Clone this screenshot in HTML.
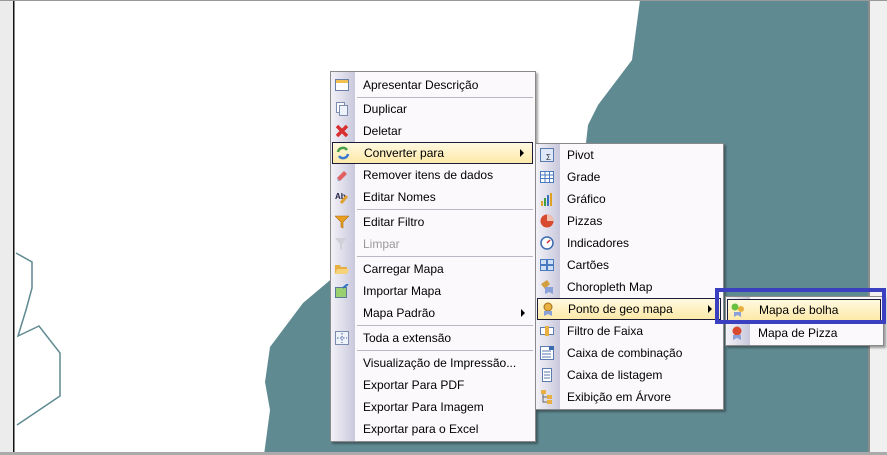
<!DOCTYPE html>
<html><head><meta charset="utf-8"><style>
body{margin:0;width:887px;height:455px;overflow:hidden;background:#fff;position:relative;font-family:"Liberation Sans",sans-serif;font-size:12px;color:#000}
.abs{position:absolute}
.menu{position:absolute;background:#fbf9fc;border:1px solid #8a8a8a;box-shadow:2px 2px 2px rgba(0,0,0,.35)}
.menu .col{position:absolute;left:0;top:0;bottom:0;width:24px;background:linear-gradient(90deg,#f3f2f8,#c9c8dc)}
.it{position:absolute;left:0;right:0;height:22px;line-height:22px}
.it span{position:absolute}
.hl{background:linear-gradient(#fff9e0,#fde9a8);border:1px solid #1b1b3a;left:1px;right:2px;height:20px;line-height:20px}
.sep{position:absolute;left:26px;right:2px;height:1px;background:#b8b8c4}
.ic{position:absolute;left:4px;top:4px;width:14px;height:14px}
.arr{position:absolute;right:10px;top:7px;width:0;height:0;border-left:4px solid #000;border-top:4px solid transparent;border-bottom:4px solid transparent}
.dis{color:#9a9a9a}
</style></head><body>
<svg class="abs" style="left:0;top:0" width="887" height="455">
<polygon points="640,0 870,0 870,455 264,455 270,410 265,382 270,347 303,303 335,276 450,200 586,143 588,125 598,105 632,60" fill="#608a92"/>
<polyline points="16,253 32,262 32,288 26,310 18,336 39,326 60,353 60,396 17,425" fill="none" stroke="#5f8990" stroke-width="1.5"/>
<rect x="0" y="0" width="13" height="455" fill="#ececec"/>
<rect x="13" y="0" width="1.5" height="455" fill="#111"/>
<rect x="868" y="0" width="2" height="455" fill="#8c8c8c"/>
<rect x="870" y="0" width="17" height="455" fill="#f0f0f0"/>
<rect x="0" y="0" width="887" height="1" fill="#999"/>
<rect x="0" y="452" width="887" height="3" fill="#aaa"/>
</svg>

<div class="menu" style="left:330px;top:71px;width:204px;height:369px">
<div class="col"></div>
<div class="it" style="top:2px"><svg class="ic" viewBox="0 0 14 14"><rect x="0.5" y="1.5" width="13" height="11" fill="#fff" stroke="#6a7fa8"/><rect x="1" y="2" width="12" height="3" fill="#f2c050"/></svg><span style="left:32px">Apresentar Descrição</span></div>
<div class="sep" style="top:25px"></div>
<div class="it" style="top:26px"><svg class="ic" viewBox="0 0 14 14"><rect x="1.5" y="0.5" width="8" height="10" fill="#fff" stroke="#7a8db0"/><rect x="4.5" y="3.5" width="8" height="10" fill="#eef3fb" stroke="#7a8db0"/></svg><span style="left:32px">Duplicar</span></div>
<div class="it" style="top:48px"><svg class="ic" viewBox="0 0 14 14"><path d="M2 2L12 12M12 2L2 12" stroke="#d83030" stroke-width="3.5"/></svg><span style="left:32px">Deletar</span></div>
<div class="it hl" style="top:70px"><svg class="ic" style="top:3px;left:3px" viewBox="0 0 14 14"><path d="M2 6A5 5 0 0 1 11 4" stroke="#4aa04a" stroke-width="2.5" fill="none"/><path d="M12 8A5 5 0 0 1 3 10" stroke="#3a7ad0" stroke-width="2.5" fill="none"/></svg><span style="left:31px">Converter para</span><div class="arr" style="top:6px;right:8px"></div></div>
<div class="it" style="top:92px"><svg class="ic" viewBox="0 0 14 14"><path d="M2 10L9 3L12 6L5 13Z" fill="#e06060"/><path d="M2 10L5 13L3 13Z" fill="#8aa0d0"/></svg><span style="left:32px">Remover itens de dados</span></div>
<div class="it" style="top:114px"><svg class="ic" viewBox="0 0 14 14"><text x="0" y="9" font-size="8" font-family="Liberation Sans" fill="#224" font-weight="bold">Ab</text><path d="M6 13L12 6" stroke="#e0a030" stroke-width="3"/></svg><span style="left:32px">Editar Nomes</span></div>
<div class="sep" style="top:137px"></div>
<div class="it" style="top:139px"><svg class="ic" viewBox="0 0 14 14"><path d="M0 1H14L8 7V13L6 12V7Z" fill="#e8a020" stroke="#b06a10" stroke-width=".6"/></svg><span style="left:32px">Editar Filtro</span></div>
<div class="it dis" style="top:161px"><svg class="ic" viewBox="0 0 14 14"><path d="M0 1H12L7 7V13L5 12V7Z" fill="#d0d0d8"/></svg><span style="left:32px">Limpar</span></div>
<div class="sep" style="top:184px"></div>
<div class="it" style="top:186px"><svg class="ic" viewBox="0 0 14 14"><path d="M0 3H5L6 5H12V12H0Z" fill="#e8b040"/><path d="M2 7H14L12 12H0Z" fill="#f6d27a"/></svg><span style="left:32px">Carregar Mapa</span></div>
<div class="it" style="top:208px"><svg class="ic" viewBox="0 0 14 14"><rect x="0.5" y="3.5" width="11" height="10" fill="#9ad070" stroke="#5a7a9a"/><path d="M8 4L13 0" stroke="#2a70c0" stroke-width="2"/></svg><span style="left:32px">Importar Mapa</span></div>
<div class="it" style="top:230px"><span style="left:32px">Mapa Padrão</span><div class="arr"></div></div>
<div class="sep" style="top:253px"></div>
<div class="it" style="top:255px"><svg class="ic" viewBox="0 0 14 14"><rect x="0.5" y="0.5" width="13" height="13" fill="#eef2fb" stroke="#7a8db0"/><path d="M7 2V12M2 7H12" stroke="#3a5a9a" stroke-dasharray="1.5 1.5"/></svg><span style="left:32px">Toda a extensão</span></div>
<div class="sep" style="top:278px"></div>
<div class="it" style="top:280px"><span style="left:32px">Visualização de Impressão...</span></div>
<div class="it" style="top:302px"><span style="left:32px">Exportar Para PDF</span></div>
<div class="it" style="top:324px"><span style="left:32px">Exportar Para Imagem</span></div>
<div class="it" style="top:346px"><span style="left:32px">Exportar para o Excel</span></div>
</div>

<div class="menu" style="left:535px;top:143px;width:187px;height:265px">
<div class="col"></div>
<div class="it" style="top:0px"><svg class="ic" viewBox="0 0 14 14"><rect x="0.5" y="0.5" width="13" height="13" fill="#dfe8f8" stroke="#5a7ab0"/><text x="6" y="12" font-size="8" fill="#333">Σ</text></svg><span style="left:31px">Pivot</span></div>
<div class="it" style="top:22px"><svg class="ic" viewBox="0 0 14 14"><rect x="0.5" y="1.5" width="13" height="11" fill="#fff" stroke="#4a7ac0"/><path d="M0 5H14M0 8.5H14M5 1V13M9.5 1V13" stroke="#4a7ac0"/></svg><span style="left:31px">Grade</span></div>
<div class="it" style="top:44px"><svg class="ic" viewBox="0 0 14 14"><rect x="1" y="9" width="2" height="5" fill="#e0a020"/><rect x="4" y="6" width="2" height="8" fill="#40a040"/><rect x="7" y="3" width="2" height="11" fill="#3a70c0"/><rect x="10" y="1" width="2" height="13" fill="#e0a020"/></svg><span style="left:31px">Gráfico</span></div>
<div class="it" style="top:66px"><svg class="ic" viewBox="0 0 14 14"><circle cx="7" cy="7" r="6.5" fill="#d84a30"/><path d="M7 7V0.5A6.5 6.5 0 0 1 13.5 7Z" fill="#f2c0b0"/></svg><span style="left:31px">Pizzas</span></div>
<div class="it" style="top:88px"><svg class="ic" viewBox="0 0 14 14"><circle cx="7" cy="7" r="6" fill="#fff" stroke="#3a6ab0" stroke-width="1.5"/><path d="M7 7L10 4" stroke="#d03030" stroke-width="1.5"/></svg><span style="left:31px">Indicadores</span></div>
<div class="it" style="top:110px"><svg class="ic" viewBox="0 0 14 14"><rect x="0.5" y="1.5" width="6" height="5" fill="#cfe0f6" stroke="#4a7ac0"/><rect x="7.5" y="1.5" width="6" height="5" fill="#cfe0f6" stroke="#4a7ac0"/><rect x="0.5" y="7.5" width="6" height="5" fill="#cfe0f6" stroke="#4a7ac0"/><rect x="7.5" y="7.5" width="6" height="5" fill="#cfe0f6" stroke="#4a7ac0"/></svg><span style="left:31px">Cartões</span></div>
<div class="it" style="top:132px"><svg class="ic" viewBox="0 0 14 14"><path d="M1 4L7 0L10 4L5 9Z" fill="#d0a040"/><path d="M5 7H13V14L9 12L5 14Z" fill="#8aa0d8"/></svg><span style="left:31px">Choropleth Map</span></div>
<div class="it hl" style="top:154px"><svg class="ic" style="top:3px;left:3px" viewBox="0 0 14 14"><circle cx="7" cy="5" r="4" fill="#e8b040" stroke="#a07020"/><path d="M3 9H11V14L7 12L3 14Z" fill="#8aa0d8"/></svg><span style="left:30px">Ponto de geo mapa</span><div class="arr" style="top:6px;right:8px"></div></div>
<div class="it" style="top:176px"><svg class="ic" viewBox="0 0 14 14"><rect x="0.5" y="3.5" width="13" height="7" fill="#fff" stroke="#5a7ab0"/><rect x="5" y="2" width="4" height="10" fill="#e8b040"/></svg><span style="left:31px">Filtro de Faixa</span></div>
<div class="it" style="top:198px"><svg class="ic" viewBox="0 0 14 14"><rect x="0.5" y="0.5" width="13" height="13" fill="#fff" stroke="#5a7ab0"/><path d="M2 5H11M2 8H11M2 11H11" stroke="#5a7ab0"/><rect x="9" y="0" width="5" height="4" fill="#3a6ab0"/></svg><span style="left:31px">Caixa de combinação</span></div>
<div class="it" style="top:220px"><svg class="ic" viewBox="0 0 14 14"><rect x="2.5" y="0.5" width="9" height="13" fill="#fff" stroke="#5a7ab0"/><path d="M4 4H10M4 7H10M4 10H10" stroke="#5a7ab0"/></svg><span style="left:31px">Caixa de listagem</span></div>
<div class="it" style="top:242px"><svg class="ic" viewBox="0 0 14 14"><rect x="1" y="0" width="5" height="4" fill="#e8b040"/><rect x="7" y="5" width="5" height="4" fill="#e8b040"/><rect x="7" y="10" width="5" height="4" fill="#e8b040"/><path d="M3 4V12H7M3 7H7" stroke="#666" fill="none"/></svg><span style="left:31px">Exibição em Árvore</span></div>
</div>

<div class="menu" style="left:725px;top:296px;width:157px;height:48px">
<div class="col"></div>
<div class="it hl" style="top:2px"><svg class="ic" style="top:3px;left:3px" viewBox="0 0 14 14"><circle cx="4" cy="4" r="3.5" fill="#6ac040"/><circle cx="10" cy="6" r="3" fill="#e8b040"/><path d="M3 9H10V14L6.5 12L3 14Z" fill="#8aa0d8"/></svg><span style="left:31px">Mapa de bolha</span></div>
<div class="it" style="top:25px"><svg class="ic" viewBox="0 0 14 14"><circle cx="7" cy="5" r="4.5" fill="#d84a30"/><path d="M3 9H11V14L7 12L3 14Z" fill="#8aa0d8"/></svg><span style="left:32px">Mapa de Pizza</span></div>
</div>
<div class="abs" style="left:715px;top:288px;width:163px;height:28px;border:4px solid #3b40c0"></div>
</body></html>
